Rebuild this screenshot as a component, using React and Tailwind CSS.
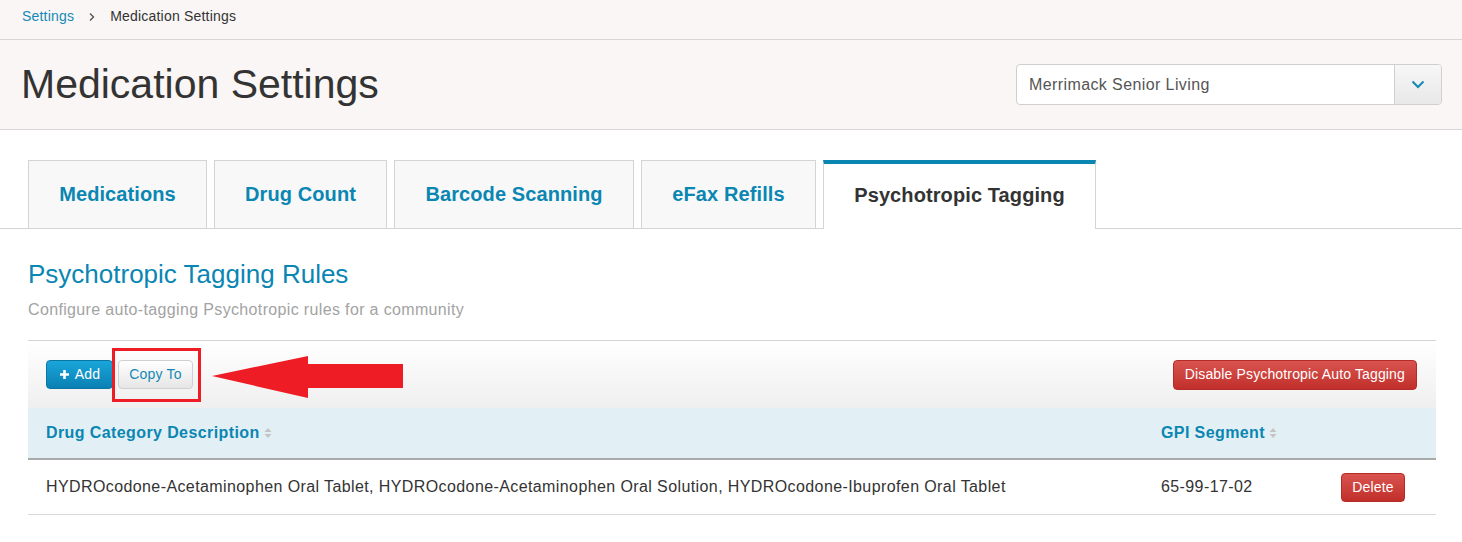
import React from 'react';

const tabs = [
  { label: 'Medications', width: 'w-[179px]' },
  { label: 'Drug Count', width: 'w-[173px]' },
  { label: 'Barcode Scanning', width: 'w-[240px]' },
  { label: 'eFax Refills', width: 'w-[175px]' },
  { label: 'Psychotropic Tagging', width: 'w-[273px]', active: true },
];

function SortIcon() {
  return (
    <svg width="8" height="12" viewBox="0 0 8 12" className="ml-1 inline-block">
      <path d="M4 1 L7.5 5 L0.5 5 Z" fill="#c4c4c4" />
      <path d="M4 11 L7.5 7 L0.5 7 Z" fill="#c4c4c4" />
    </svg>
  );
}

export default function App() {
  return (
    <div className="min-h-screen bg-white font-['Liberation_Sans',Arial,sans-serif] text-[#333]">
      {/* breadcrumb */}
      <div className="flex h-[40px] items-center gap-[14px] border-b border-[#d9d6d5] bg-[#f9f6f5] pb-[6px] pl-[22px] text-[14px] tracking-[0.2px]">
        <span className="text-[#1589b5]">Settings</span>
        <svg width="8" height="10" viewBox="0 0 8 10">
          <path d="M2 1.5 L5.5 5 L2 8.5" stroke="#555" strokeWidth="1.4" fill="none" />
        </svg>
        <span className="text-[#333]">Medication Settings</span>
      </div>

      {/* header */}
      <div className="flex h-[90px] items-center justify-between border-b border-[#d9d6d5] bg-[#f9f6f5] pl-[21px] pr-[20px]">
        <h1 className="text-[41px] leading-none text-[#333]">Medication Settings</h1>
        <div className="flex h-[41px] w-[426px] overflow-hidden rounded-[4px] border border-[#cfcfcf] bg-white">
          <div className="flex flex-1 items-center pl-[12px] text-[16px] tracking-[0.4px] text-[#555]">Merrimack Senior Living</div>
          <div className="flex w-[47px] items-center justify-center border-l border-[#cfcfcf] bg-gradient-to-b from-[#f7f7f7] to-[#e8e8e8]">
            <svg width="14" height="9" viewBox="0 0 14 9">
              <path d="M1.5 1.5 L7 7 L12.5 1.5" stroke="#1589b5" strokeWidth="2" fill="none" />
            </svg>
          </div>
        </div>
      </div>

      {/* tabs */}
      <div className="flex gap-[7px] border-b border-[#d4d4d4] pl-[28px] pt-[30px]">
        {tabs.map((t) => (
          <div
            key={t.label}
            className={`${t.width} ${
              t.active
                ? '-mb-px flex h-[69px] items-center justify-center border-x border-t-[4px] border-x-[#d4d4d4] border-t-[#0a86b3] bg-white pb-[4px] text-[20px] font-bold tracking-[0.1px] text-[#333]'
                : 'flex h-[68px] items-center justify-center border-x border-t border-[#d4d4d4] bg-[#f8f8f8] pb-[1px] text-[20px] font-bold tracking-[0.1px] text-[#0a86b3]'
            }`}
          >
            {t.label}
          </div>
        ))}
      </div>

      {/* content */}
      <div className="pl-[28px] pr-[26px] pt-[30px]">
        <h2 className="text-[26px] leading-[30px] text-[#0a86b3]">Psychotropic Tagging Rules</h2>
        <p className="mt-[9px] text-[16px] tracking-[0.35px] text-[#a3a3a3]">Configure auto-tagging Psychotropic rules for a community</p>

        <div className="mt-[18px]">
          <div className="flex h-[68px] items-center justify-between border-t border-[#d4d4d4] bg-gradient-to-b from-white to-[#efefef] pl-[18px] pr-[19px]">
            <div className="flex items-center gap-[5px]">
              <button className="flex h-[29px] w-[67px] items-center justify-center gap-[5px] rounded-[4px] border border-[#0a76a3] bg-gradient-to-b from-[#1aa6da] to-[#0a80b3] text-[14px] tracking-[0.2px] text-white">
                <svg width="11" height="11" viewBox="0 0 11 11">
                  <path d="M5.5 1 V10 M1 5.5 H10" stroke="white" strokeWidth="2.6" />
                </svg>
                Add
              </button>
              <div className="relative">
                <button className="flex h-[29px] w-[75px] items-center justify-center rounded-[4px] border border-[#d0d0d0] bg-gradient-to-b from-white to-[#e6e6e6] text-[14px] tracking-[0.2px] text-[#1589b5]">
                  Copy To
                </button>
                <span className="absolute left-[-6px] top-[-12px] h-[54px] w-[89px] border-[3px] border-[#ee1c24]" />
                <svg
                  className="absolute left-[94px] top-[-4px]"
                  width="192"
                  height="42"
                  viewBox="0 0 192 42"
                >
                  <polygon points="0,20 96,0 96,8 191,8 191,32 96,32 96,42" fill="#ee1c24" />
                </svg>
              </div>
            </div>
            <button className="h-[30px] rounded-[4px] border border-[#b52b27] bg-gradient-to-b from-[#d9534f] to-[#c12e2a] px-[11px] text-[14px] tracking-[0.15px] text-white">
              Disable Psychotropic Auto Tagging
            </button>
          </div>

          <div className="grid h-[52px] grid-cols-[1fr_180px_113px] items-center border-b-2 border-[#aaaaaa] bg-[#e2f0f5] text-[16px] font-bold tracking-[0.4px] text-[#0a86b3]">
            <div className="flex items-center pl-[18px]">
              Drug Category Description <SortIcon />
            </div>
            <div className="flex items-center pl-[18px]">
              GPI Segment <SortIcon />
            </div>
            <div />
          </div>

          <div className="grid h-[55px] grid-cols-[1fr_180px_113px] items-center border-b border-[#dadada] text-[16px] tracking-[0.4px] text-[#333]">
            <div className="pl-[18px]">
              HYDROcodone-Acetaminophen Oral Tablet, HYDROcodone-Acetaminophen Oral Solution, HYDROcodone-Ibuprofen Oral Tablet
            </div>
            <div className="pl-[18px]">65-99-17-02</div>
            <div className="pl-[18px]">
              <button className="h-[29px] w-[64px] rounded-[4px] border border-[#b52b27] bg-gradient-to-b from-[#d9534f] to-[#c12e2a] text-[14px] tracking-[0.2px] text-white">
                Delete
              </button>
            </div>
          </div>
        </div>
      </div>
    </div>
  );
}
